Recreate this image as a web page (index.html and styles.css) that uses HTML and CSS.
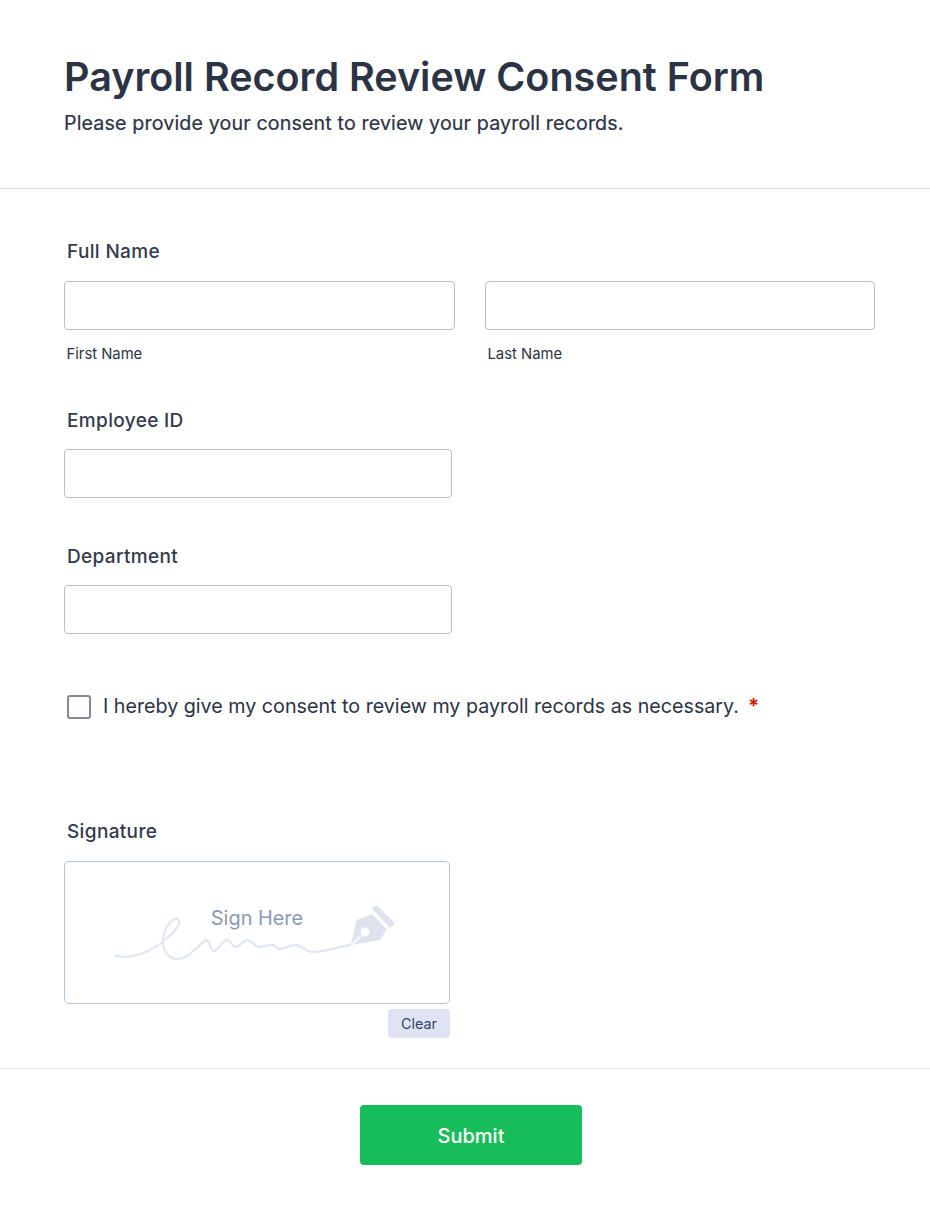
FILE: index.html
```html
<!DOCTYPE html>
<html lang="en">
<head>
<meta charset="utf-8">
<title>Payroll Record Review Consent Form</title>
<link rel="stylesheet" href="styles.css">
</head>
<body>
<form class="form">
  <header class="header">
    <h1 class="title">Payroll Record Review Consent Form</h1>
    <p class="subtitle">Please provide your consent to review your payroll records.</p>
  </header>
  <main class="fields">
    <section class="field field-name">
      <label class="label">Full Name</label>
      <div class="name-row">
        <div class="name-col">
          <input class="input input-full" type="text">
          <span class="sublabel">First Name</span>
        </div>
        <div class="name-col">
          <input class="input input-full" type="text">
          <span class="sublabel">Last Name</span>
        </div>
      </div>
    </section>
    <section class="field field-id">
      <label class="label">Employee ID</label>
      <input class="input input-half" type="text">
    </section>
    <section class="field field-dept">
      <label class="label">Department</label>
      <input class="input input-half" type="text">
    </section>
    <section class="consent">
      <span class="checkbox"></span>
      <span class="consent-text">I hereby give my consent to review my payroll records as necessary.</span>
      <span class="required">*</span>
    </section>
    <section class="field field-sign">
      <label class="label">Signature</label>
      <div class="sign-wrap">
        <div class="sign-box">
          <svg class="sign-art" width="384" height="141" viewBox="0 0 384 141" fill="none">
            <path d="M50 93.700C60 96 72 95 85 88C97 82 108 72 113 64C116 58 112 55 108 58C101 62 96 76 99 86C102 96 110 99 118 96C127 92 133 84 140 79C145 76 145 89 149 89C153 89 157 78 162 78C166 78 167 85 171 85C175 85 178 78 182 78C187 78 190 85 195 85C200 85 204 82 208 83C211 84 212 87 215 87C220 87 226 82 232 83C238 84 241 90 248 90C260 90 272 85 285 83" stroke="#e3e7f2" stroke-width="2.300" stroke-linecap="round"/>
            <path d="M286 82.500L291.700 58L307.300 52.300L321.700 67.300L315 78L287 83Z" fill="#dfe3ee"/>
            <path d="M287 82.500L297 73" stroke="#fff" stroke-width="1.500"/>
            <circle cx="300" cy="69.700" r="4.500" fill="#fff"/>
            <path d="M306.700 46.300L311.700 43L330 61.300L325 66.300Z" fill="#dfe3ee"/>
          </svg>
          <span class="sign-hint">Sign Here</span>
        </div>
        <button class="clear" type="button">Clear</button>
      </div>
    </section>
  </main>
  <footer class="footer">
    <button class="submit" type="button">Submit</button>
  </footer>
</form>
</body>
</html>
```
FILE: styles.css
```css
* { box-sizing: border-box; }
html, body { margin: 0; padding: 0; background: #fff; }
body { font-family: Inter, "Liberation Sans", sans-serif; color: #2c3345; }
.form { width: 930px; height: 1214px; display: flex; flex-direction: column; }
.header { height: 189px; padding: 53px 64px 0; border-bottom: 1px solid #d8dae9; }
.title { margin: 0; font-size: 39.500px; line-height: 48px; font-weight: 600; }
.subtitle { margin: 10px 0 0; font-size: 19.700px; line-height: 24px; font-weight: 400; letter-spacing: 0.120px; -webkit-text-stroke: 0.200px #2c3345; }
.fields { height: 880px; padding: 0 55px 0 64px; border-bottom: 1px solid #eaebf2; }
.field { display: flex; flex-direction: column; align-items: flex-start; }
.label { margin-left: 3px; font-size: 19px; line-height: 24px; font-weight: 500; letter-spacing: 0.350px; color: #343a4c; }
.input { height: 49px; border: 1px solid #b8bccc; border-radius: 4px; background: #fff; padding: 0 8px; display: block; }
.input-full { width: 100%; }
.input-half { width: 388px; margin-top: 16px; }
.field-name { padding-top: 51px; }
.name-row { width: 100%; display: grid; grid-template-columns: 391px 390px; column-gap: 30px; margin-top: 17px; }
.name-col { display: flex; flex-direction: column; }
.sublabel { margin: 16px 0 0 2.500px; font-size: 14.800px; line-height: 17px; }
.field-id { padding-top: 46px; }
.field-dept { padding-top: 47px; }
.consent { display: flex; align-items: center; margin: 59px 0 0 3px; font-size: 19.700px; line-height: 26px; }
.checkbox { width: 24px; height: 24px; border: 2px solid #858a99; border-radius: 3px; background: #fff; margin: 2px 12px 0 0; flex: none; }
.required { margin-left: 9px; color: #cf2200; font-weight: 700; font-size: 20px; }
.field-sign { padding-top: 101px; }
.sign-wrap { width: 386px; margin-top: 17px; display: flex; flex-direction: column; align-items: flex-end; }
.sign-box { position: relative; width: 386px; height: 143px; border: 1px solid #b5c4dd; border-radius: 5px; background: #fff; }
.sign-art { position: absolute; left: 0; top: 0; }
.sign-hint { position: absolute; left: 0; right: 0; top: 44px; text-align: center; font-size: 19.900px; line-height: 24px; color: #8d9ab5; }
.clear { margin-top: 5px; width: 62px; height: 29px; border: 0; border-radius: 4px; padding: 0; background: #dfe3f3; color: #33456b; font-family: inherit; font-size: 14.400px; }
.footer { display: flex; justify-content: center; padding: 36px 0 0 12px; }
.submit { width: 222px; height: 60px; border: 0; border-radius: 4px; background: #18bd5b; color: #fff; font-family: inherit; font-size: 20px; font-weight: 500; padding-top: 2px; }
```
